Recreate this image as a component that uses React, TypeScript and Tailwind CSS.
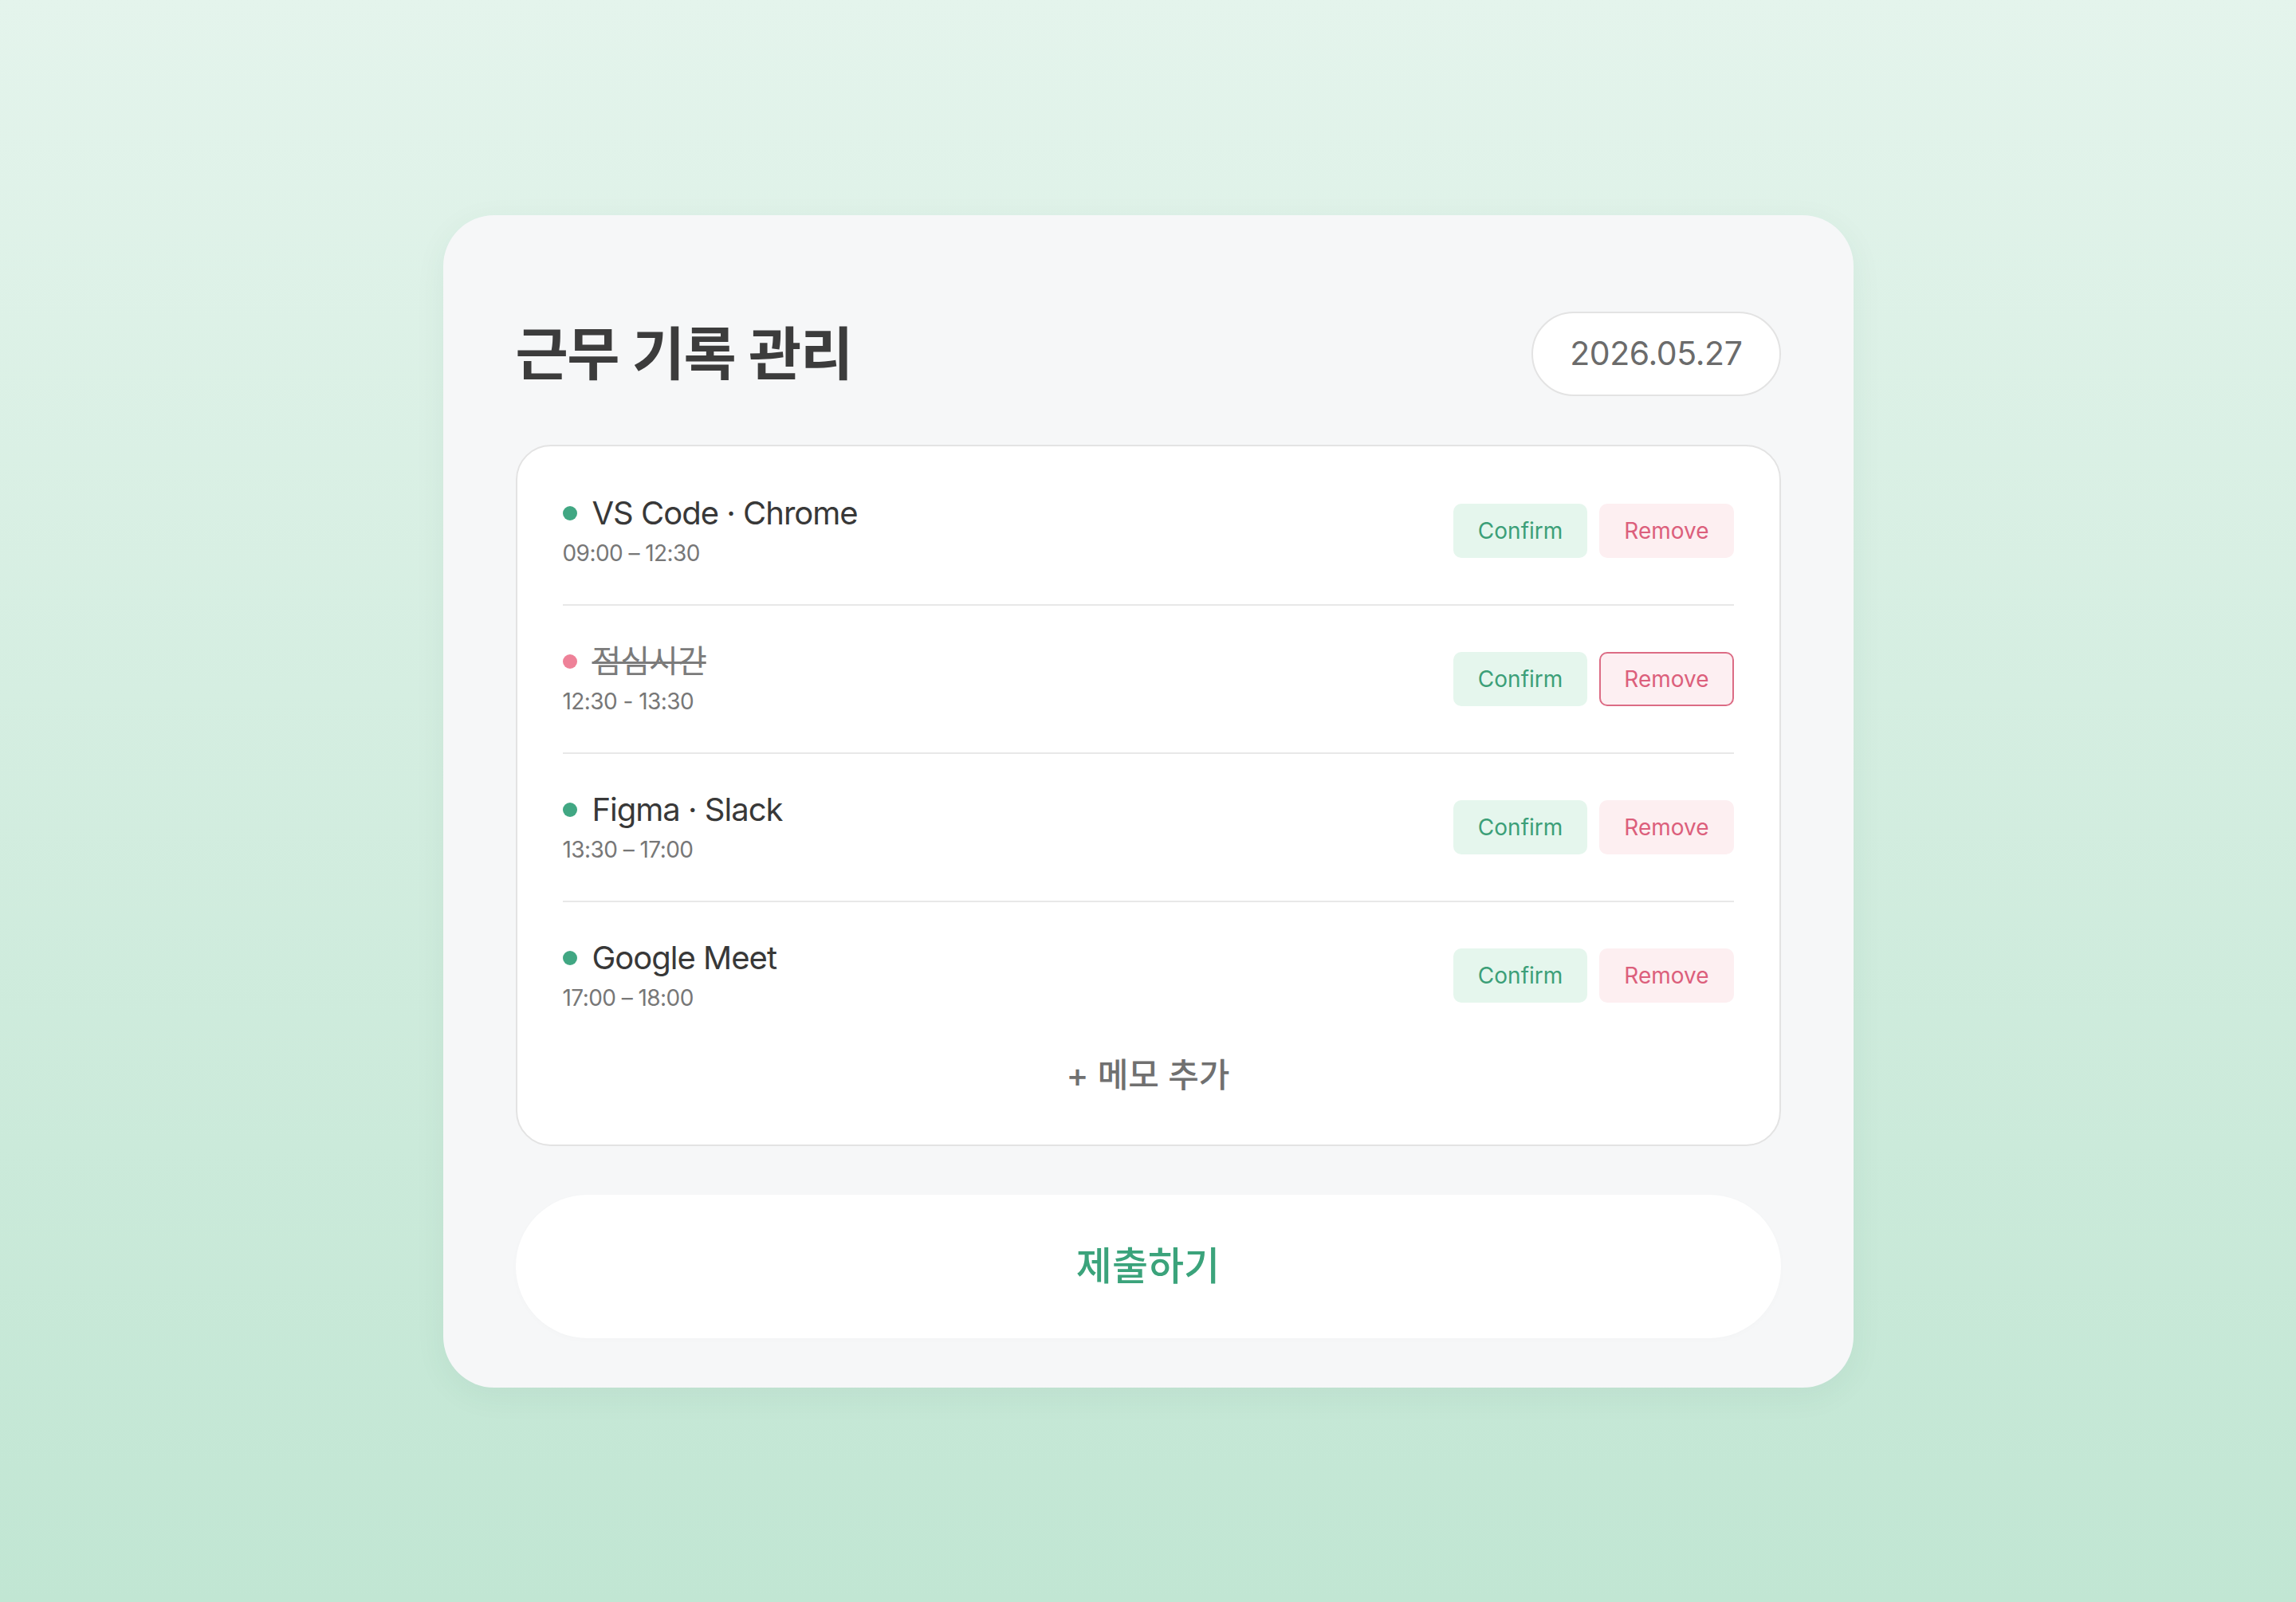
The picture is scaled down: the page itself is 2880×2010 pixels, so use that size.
import { useState } from "react";

type Entry = {
  id: number;
  title: string;
  time: string;
  removed?: boolean;
};

const entries: Entry[] = [
  { id: 1, title: "VS Code · Chrome", time: "09:00 – 12:30" },
  { id: 2, title: "점심시간", time: "12:30 - 13:30", removed: true },
  { id: 3, title: "Figma · Slack", time: "13:30 – 17:00" },
  { id: 4, title: "Google Meet", time: "17:00 – 18:00" },
];

const font = { fontFamily: 'Inter, "Noto Sans CJK KR", sans-serif' };

const EntryRow = ({ entry, last }: { entry: Entry; last: boolean }) => {
  return (
    <div className={last ? "" : "border-b-2 border-[#e8e8e8]"}>
      <div className="flex items-center justify-between h-[184px]">
        <div className="flex flex-col gap-[8px]">
          <div className="flex items-center gap-[19px] h-[48px]">
            <span
              className={
                entry.removed
                  ? "w-[18px] h-[18px] rounded-full bg-[#ee8198]"
                  : "w-[18px] h-[18px] rounded-full bg-[#41a783]"
              }
            />
            <span
              className={
                entry.removed
                  ? "text-[40px] leading-[48px] text-[#7b7b7b] line-through decoration-[3px] tracking-[-0.025em]"
                  : "text-[40px] leading-[48px] text-[#383838] tracking-[-0.025em]"
              }
            >
              {entry.title}
            </span>
          </div>
          <span className="text-[28px] leading-[36px] text-[#777777] tracking-[-0.02em]">
            {entry.time}
          </span>
        </div>
        <div className="flex items-center gap-[15px]">
          <button className="h-[68px] px-[29px] rounded-[10px] border-2 border-transparent bg-[#e5f6ed] text-[28px] text-[#3c9f78]">
            Confirm
          </button>
          <button
            className={
              entry.removed
                ? "h-[68px] px-[29px] rounded-[10px] border-2 border-[#dc6c85] bg-[#fdeff2] text-[28px] text-[#dc5f7c]"
                : "h-[68px] px-[29px] rounded-[10px] border-2 border-transparent bg-[#fdeff1] text-[28px] text-[#dc5f7c]"
            }
          >
            Remove
          </button>
        </div>
      </div>
    </div>
  );
};

export default function App() {
  const [date] = useState("2026.05.27");

  return (
    <div
      className="min-h-screen w-full flex items-center justify-center bg-gradient-to-b from-[#e4f4ec] to-[#c1e6d3]"
      style={font}
    >
      <div className="w-[1769px] rounded-[64px] bg-[#f6f7f8] pt-[121px] px-[91px] pb-[62px] shadow-[0_10px_40px_rgba(40,90,70,0.06)] flex flex-col gap-[61px]">
        <header className="flex items-center justify-between">
          <h1 className="text-[72px] font-semibold text-[#3c3c3c] leading-none tracking-[-0.02em]">
            근무 기록 관리
          </h1>
          <div className="h-[106px] px-[46px] flex items-center rounded-full border-2 border-[#e3e3e3] bg-white text-[41px] text-[#6b6b6b] tracking-[-0.01em]">
            {date}
          </div>
        </header>

        <section className="rounded-[44px] border-2 border-[#e3e3e3] bg-white px-[57px] pt-[14px] pb-[63px]">
          {entries.map((e, i) => (
            <EntryRow key={e.id} entry={e} last={i === entries.length - 1} />
          ))}
          <button className="mt-[9px] w-full h-[48px] flex items-center justify-center text-[42px] font-medium text-[#707070]">
            + 메모 추가
          </button>
        </section>

        <button className="h-[180px] w-full rounded-full bg-white text-[49px] font-medium text-[#3ba37b] shadow-[0_2px_10px_rgba(0,0,0,0.015)]">
          제출하기
        </button>
      </div>
    </div>
  );
}
